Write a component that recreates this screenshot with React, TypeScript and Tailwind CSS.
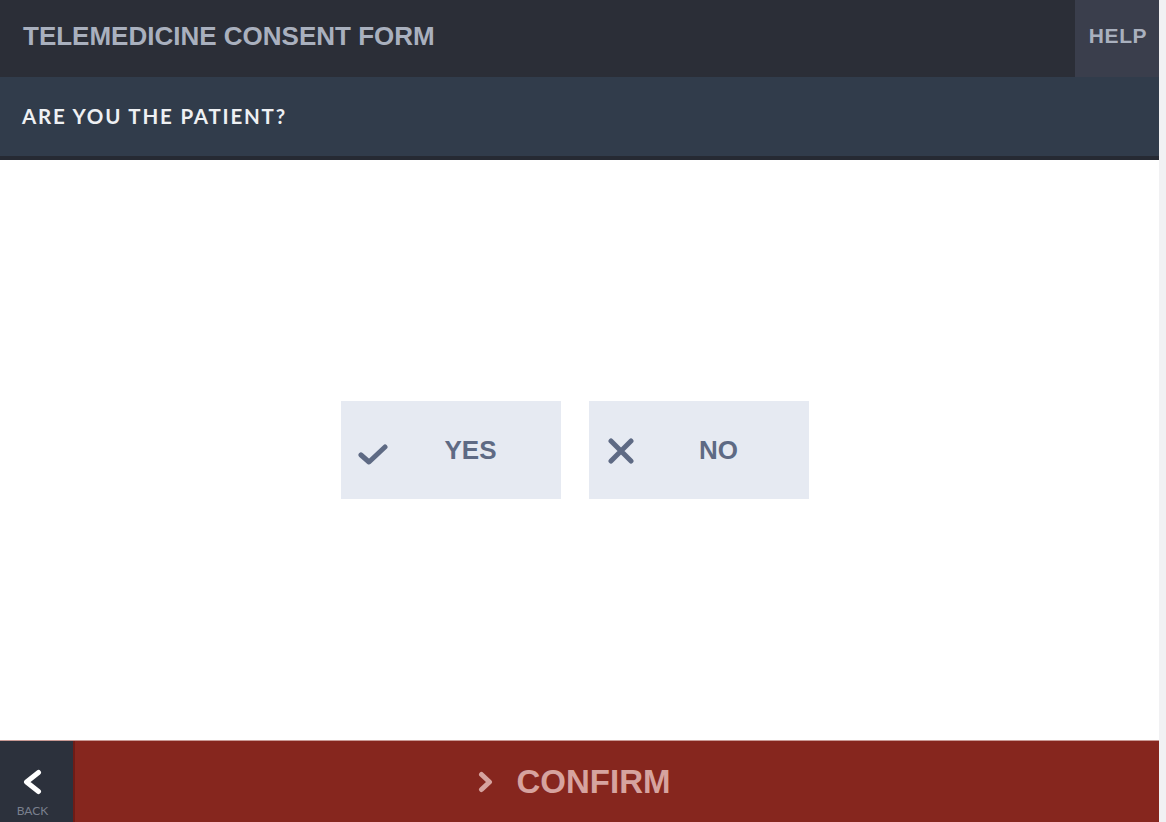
const CheckIcon = () => (
  <svg width="30" height="22" viewBox="0 0 30 22" fill="none">
    <path d="M3 12 L11 19 L27 4" stroke="#5e6a84" strokeWidth="5" strokeLinecap="round" strokeLinejoin="round" />
  </svg>
);

const CrossIcon = () => (
  <svg width="26" height="26" viewBox="0 0 26 26" fill="none">
    <path d="M3 3 L23 23 M23 3 L3 23" stroke="#5e6a84" strokeWidth="5" strokeLinecap="round" />
  </svg>
);

const Chevron = ({ dir, color, w, h, stroke }: { dir: "left" | "right"; color: string; w: number; h: number; stroke: number }) => {
  const p = stroke / 2 + 1;
  const d =
    dir === "left"
      ? `M${w - p} ${p} L${p} ${h / 2} L${w - p} ${h - p}`
      : `M${p} ${p} L${w - p} ${h / 2} L${p} ${h - p}`;
  return (
    <svg width={w} height={h} viewBox={`0 0 ${w} ${h}`} fill="none">
      <path d={d} stroke={color} strokeWidth={stroke} strokeLinecap="round" strokeLinejoin="round" />
    </svg>
  );
};

const ChoiceButton = ({ label, icon, iconClass }: { label: string; icon: React.ReactNode; iconClass: string }) => (
  <button className="relative flex h-[98px] w-[220px] items-center bg-[#e6eaf2]">
    <span className={`absolute flex items-center ${iconClass}`}>{icon}</span>
    <span className="ml-[60px] mt-[1px] w-[140px] text-center font-['Liberation_Sans',Arial,sans-serif] text-[26px] font-bold text-[#5e6a84]">
      {label}
    </span>
  </button>
);

export default function App() {
  return (
    <div className="flex h-[822px] w-[1166px] overflow-hidden bg-[#f1f1f3]">
      <div className="flex w-[1159px] flex-col bg-white">
        {/* title bar */}
        <div className="flex h-[77px] bg-[#2b2e37]">
          <div className="flex flex-1 items-center pl-[23px] pb-[4px]">
            <h1 className="font-['Liberation_Sans',Arial,sans-serif] text-[26px] font-bold text-[#a9b0be]">
              TELEMEDICINE CONSENT FORM
            </h1>
          </div>
          <div className="flex w-[84px] items-center justify-center bg-[#3a3e4c] pb-[6px] pl-[2px]">
            <span className="font-['Liberation_Sans',Arial,sans-serif] text-[21px] font-bold tracking-[0.6px] text-[#a9b0be]">
              HELP
            </span>
          </div>
        </div>

        {/* question bar */}
        <div className="flex h-[83px] items-center border-b-[4px] border-[#262a33] bg-[#313c4b] pl-[22px]">
          <h2 className="font-['Lato',sans-serif] text-[20.5px] font-bold tracking-[1.8px] text-[#eef0f3]">
            ARE YOU THE PATIENT?
          </h2>
        </div>

        {/* body */}
        <div className="flex flex-1 items-center justify-center gap-[28px] pr-[10px]">
          <ChoiceButton label="YES" icon={<CheckIcon />} iconClass="left-[17px] top-[42px]" />
          <ChoiceButton label="NO" icon={<CrossIcon />} iconClass="left-[19px] top-[37px]" />
        </div>

        {/* footer */}
        <div className="flex h-[82px] border-t border-[#c99a95]">
          <button className="flex w-[73px] flex-col items-center bg-[#2c313c] pt-[28px] pr-[8px]">
            <Chevron dir="left" color="#ffffff" w={19} h={26} stroke={5} />
            <span className="mt-[10px] font-['Lato',sans-serif] text-[12px] leading-none text-[#7a808e]">BACK</span>
          </button>
          <button className="flex flex-1 items-center justify-center gap-[24px] border-l-2 border-[#6e1c16] bg-[#86261e] pr-[86px]">
            <Chevron dir="right" color="#d6a39f" w={15} h={22} stroke={5} />
            <span className="font-['Liberation_Sans',Arial,sans-serif] text-[33px] font-bold text-[#d6a39f]">
              CONFIRM
            </span>
          </button>
        </div>
      </div>
      <div className="flex-1" />
    </div>
  );
}
